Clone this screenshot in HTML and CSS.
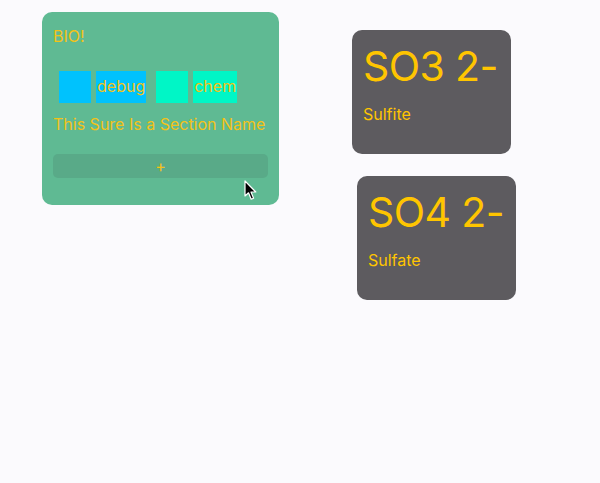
FILE: index.html
```html
<!DOCTYPE html>
<html>
<head>
<meta charset="utf-8">
<link rel="stylesheet" href="styles.css">
</head>
<body>
<div class="page">
  <div class="section-card">
    <div class="title">BIO!</div>
    <div class="tags">
      <div class="tag">
        <span class="swatch blue"></span>
        <span class="tag-name blue">debug</span>
      </div>
      <div class="tag">
        <span class="swatch teal"></span>
        <span class="tag-name teal">chem</span>
      </div>
    </div>
    <div class="section-name">This Sure Is a Section Name</div>
    <div class="add-btn">+</div>
  </div>
  <div class="ions">
    <div class="ion-card">
      <div class="formula">SO3 2-</div>
      <div class="ion-name">Sulfite</div>
    </div>
    <div class="ion-card shifted">
      <div class="formula">SO4 2-</div>
      <div class="ion-name">Sulfate</div>
    </div>
  </div>
</div>
<svg class="cursor" width="14" height="22" viewBox="0 0 14 22">
  <path d="M1 1 L1 16 L4.5 12.8 L7.2 19.2 L9.6 18.2 L7 12 L11.8 12 Z" fill="#000" stroke="#fff" stroke-width="1.2" stroke-linejoin="round"/>
</svg>
</body>
</html>
```
FILE: styles.css
```css
html, body {
  margin: 0;
  padding: 0;
  background: #fbfafd;
  font-family: Inter, "Liberation Sans", Arial, sans-serif;
}
.page {
  display: flex;
  align-items: flex-start;
  padding: 12px 0 0 42px;
}
.section-card {
  width: 237px;
  height: 193px;
  box-sizing: border-box;
  background: #5fba93;
  border-radius: 10px;
  padding: 14px 11px 0 11px;
  display: flex;
  flex-direction: column;
  color: #f3c219;
}
.title {
  font-size: 16px;
  line-height: 20px;
}
.tags {
  display: flex;
  gap: 10px;
  margin: 25px 0 0 6px;
}
.tag {
  display: flex;
  gap: 5px;
}
.swatch {
  width: 32px;
  height: 32px;
}
.tag-name {
  height: 32px;
  line-height: 30px;
  font-size: 16px;
  padding: 0 1px;
}
.blue { background: #00c2fd; }
.teal { background: #00f6c6; }
.section-name {
  margin-top: 11px;
  font-size: 16px;
  line-height: 20px;
  white-space: nowrap;
}
.add-btn {
  margin-top: 20px;
  height: 24px;
  border-radius: 5px;
  background: #59aa88;
  text-align: center;
  line-height: 24px;
  font-size: 16px;
}
.ions {
  display: flex;
  flex-direction: column;
  gap: 22px;
  margin: 18px 0 0 73px;
}
.ion-card {
  width: 159px;
  height: 124px;
  box-sizing: border-box;
  background: #5d5b5f;
  border-radius: 10px;
  padding: 13px 11px 0 11px;
  color: #ffc500;
}
.ion-card.shifted {
  margin-left: 5px;
}
.formula {
  font-size: 41px;
  line-height: 46px;
  white-space: nowrap;
  letter-spacing: -0.6px;
}
.ion-name {
  margin-top: 15px;
  font-size: 16px;
  line-height: 20px;
}
.cursor {
  position: absolute;
  left: 244px;
  top: 180px;
}
```
